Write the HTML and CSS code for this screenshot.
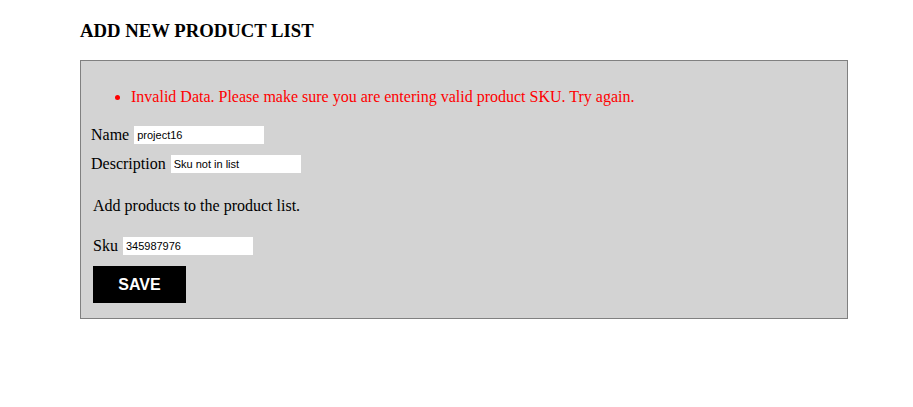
FILE: index.html
```html
<!DOCTYPE html>
<html>
<head>
<meta charset="utf-8">
<link rel="stylesheet" href="styles.css">
</head>
<body>
<div class="page">
  <h3 class="title">ADD NEW PRODUCT LIST</h3>
  <div class="panel">
    <ul class="errors">
      <li>Invalid Data. Please make sure you are entering valid product SKU. Try again.</li>
    </ul>
    <div class="row">
      <label class="lbl">Name</label>
      <input class="field" type="text" value="project16">
    </div>
    <div class="row">
      <label class="lbl">Description</label>
      <input class="field" type="text" value="Sku not in list">
    </div>
    <div class="products">
      <p class="hint">Add products to the product list.</p>
      <div class="row">
        <label class="lbl">Sku</label>
        <input class="field" type="text" value="345987976">
      </div>
      <button class="save">SAVE</button>
    </div>
  </div>
</div>
</body>
</html>
```

FILE: styles.css
```css
html, body {
  margin: 0;
  padding: 0;
  background: #fff;
}
body {
  font-family: "Liberation Serif", "Times New Roman", serif;
  font-size: 16px;
  color: #000;
}
.page {
  padding: 0 65px 0 80px;
}
.title {
  margin: 0 0 20px 0;
  padding-top: 22px;
  font-size: 18.72px;
  font-weight: bold;
  line-height: 18px;
}
.panel {
  background: #d3d3d3;
  border: 1px solid #808080;
  padding: 0 10px 15px 10px;
  width: 746px;
}
.errors {
  margin: 0;
  padding: 27px 0 0 40px;
  color: #ff0000;
  line-height: 18px;
}
.errors li {
  margin: 0;
}
.row {
  display: flex;
  align-items: center;
  margin-top: 20px;
  height: 18px;
}
.row + .row {
  margin-top: 11px;
}
.lbl {
  line-height: 18px;
  margin-right: 5px;
}
.field {
  width: 130px;
  height: 18px;
  box-sizing: border-box;
  border: none;
  padding: 1px 3px;
  margin: 0;
  font-family: "Liberation Sans", Arial, sans-serif;
  font-size: 11px;
  color: #000;
  background: #fff;
}
.products {
  padding-left: 2px;
}
.hint {
  margin: 24px 0 0 0;
  line-height: 18px;
}
.products .row {
  margin-top: 22px;
}
.save {
  display: block;
  margin-top: 11px;
  width: 93px;
  height: 37px;
  border: none;
  background: #000;
  color: #fff;
  font-family: "Liberation Sans", Arial, sans-serif;
  font-weight: bold;
  font-size: 16px;
  padding: 0;
}
```
